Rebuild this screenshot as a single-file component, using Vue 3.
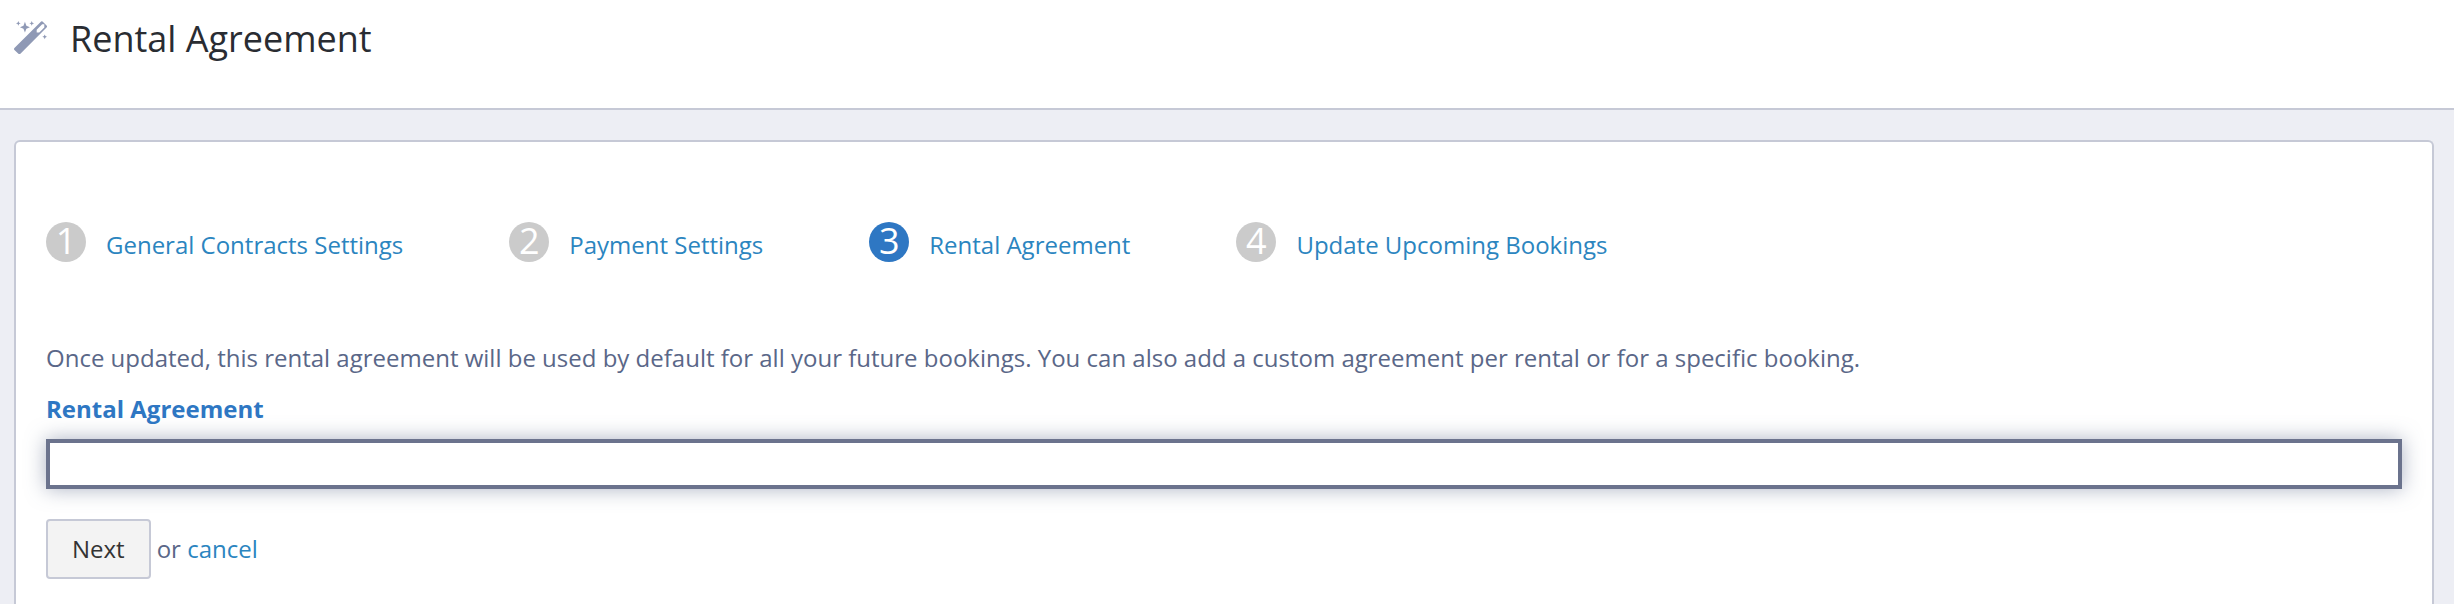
<script setup>
import { ref } from 'vue'

const steps = [
  'General Contracts Settings',
  'Payment Settings',
  'Rental Agreement',
  'Update Upcoming Bookings',
]
const current = ref(2)
const agreement = ref('')
</script>

<template>
  <div class="page">
    <header class="header">
      <svg class="wand" viewBox="0 0 32 32" aria-hidden="true">
        <path
          fill-rule="evenodd"
          d="M26.3 .5Q27 0 27.7 .6L31.8 4.5Q32.4 5.2 31.8 6L6.2 31.8Q5.2 32.6 4.3 31.8L.4 28Q-.4 27 .4 26.2ZM27.3 3.2L22 8.5V11.2H24.5L29.4 6.2V3.2Z"
        />
        <path
          d="M10.6 .8L12 4.6L15.4 6L12 7.4L10.6 11.2L9.2 7.4L5.8 6L9.2 4.6ZM4.2 0L4.9 1.6L6.5 2.3L4.9 3L4.2 4.6L3.5 3L1.9 2.3L3.5 1.6ZM17.2 0L17.9 1.6L19.5 2.3L17.9 3L17.2 4.6L16.5 3L14.9 2.3L16.5 1.6ZM29.8 13L30.5 14.6L32 15.3L30.5 16L29.8 17.6L29.1 16L27.5 15.3L29.1 14.6Z"
        />
      </svg>
      <h1 class="title">Rental Agreement</h1>
    </header>

    <main class="card">
      <nav aria-label="Setup steps">
        <ol class="steps">
          <li v-for="(step, i) in steps" :key="step">
            <a
              href="#"
              class="step"
              :class="{ active: i === current }"
              :aria-current="i === current ? 'step' : undefined"
              @click.prevent="current = i"
            >
              <span class="number">{{ i + 1 }}</span>
              <span>{{ step }}</span>
            </a>
          </li>
        </ol>
      </nav>

      <form @submit.prevent>
        <p class="description">
          Once updated, this rental agreement will be used by default for all your future bookings.
          You can also add a custom agreement per rental or for a specific booking.
        </p>
        <label class="label" for="agreement">Rental Agreement</label>
        <input id="agreement" v-model="agreement" class="input" type="text" />
        <div class="actions">
          <button class="next" type="submit">Next</button>
          <span>or <a href="#" class="cancel">cancel</a></span>
        </div>
      </form>
    </main>
  </div>
</template>

<style>
body {
  margin: 0;
  background: #edeef4;
}
</style>

<style scoped>
.page {
  display: flex;
  flex-direction: column;
  box-sizing: border-box;
  min-height: 100vh;
  font-family: "Open Sans", "Noto Sans", sans-serif;
  font-size: 24px;
  line-height: 40px;
  color: #5a6788;
}

.header {
  display: flex;
  align-items: flex-start;
  gap: 23px;
  padding: 14px 14px 44px;
  border-bottom: 2px solid #c6c9d6;
  background: #fff;
}

.wand {
  width: 33px;
  height: 33px;
  margin-top: 7px;
  fill: #8f99b5;
}

.title {
  margin: 0;
  font-size: 36px;
  font-weight: 400;
  line-height: 50px;
  color: #292c32;
}

.card {
  flex: 1;
  margin: 30px 20px 0 14px;
  padding: 80px 30px 24px;
  border: 2px solid #c6c9d6;
  border-bottom: 0;
  border-radius: 6px 6px 0 0;
  background: #fff;
}

.steps {
  display: flex;
  flex-wrap: wrap;
  gap: 24px 106px;
  margin: 0 0 74px;
  padding: 0;
  list-style: none;
}

.step {
  display: flex;
  align-items: baseline;
  gap: 20px;
  line-height: 38px;
  color: #2b85bf;
  text-decoration: none;
}

.number {
  width: 40px;
  height: 40px;
  border-radius: 50%;
  background: #cbcbcb;
  color: #fff;
  font-size: 36px;
  text-align: center;
}

.active .number {
  background: #2e77c3;
}

.description {
  margin: 0 0 11px;
}

.label {
  display: block;
  margin-bottom: 10px;
  font-weight: 700;
  color: #2e77c3;
}

.input {
  display: block;
  box-sizing: border-box;
  width: 100%;
  height: 50px;
  padding: 0 12px;
  border: 4px solid #6b738d;
  border-radius: 0;
  outline: 0;
  background: #fff;
  box-shadow: 0 0 20px rgba(90, 103, 136, 0.5);
  font: inherit;
  color: inherit;
}

.actions {
  display: flex;
  align-items: center;
  gap: 6px;
  margin-top: 30px;
}

.next {
  height: 60px;
  padding: 0 24px;
  border: 2px solid #c6c9d6;
  border-radius: 4px;
  background: #f3f3f3;
  font: inherit;
  color: #333;
}

.cancel {
  color: #2b85bf;
  text-decoration: none;
}
</style>
